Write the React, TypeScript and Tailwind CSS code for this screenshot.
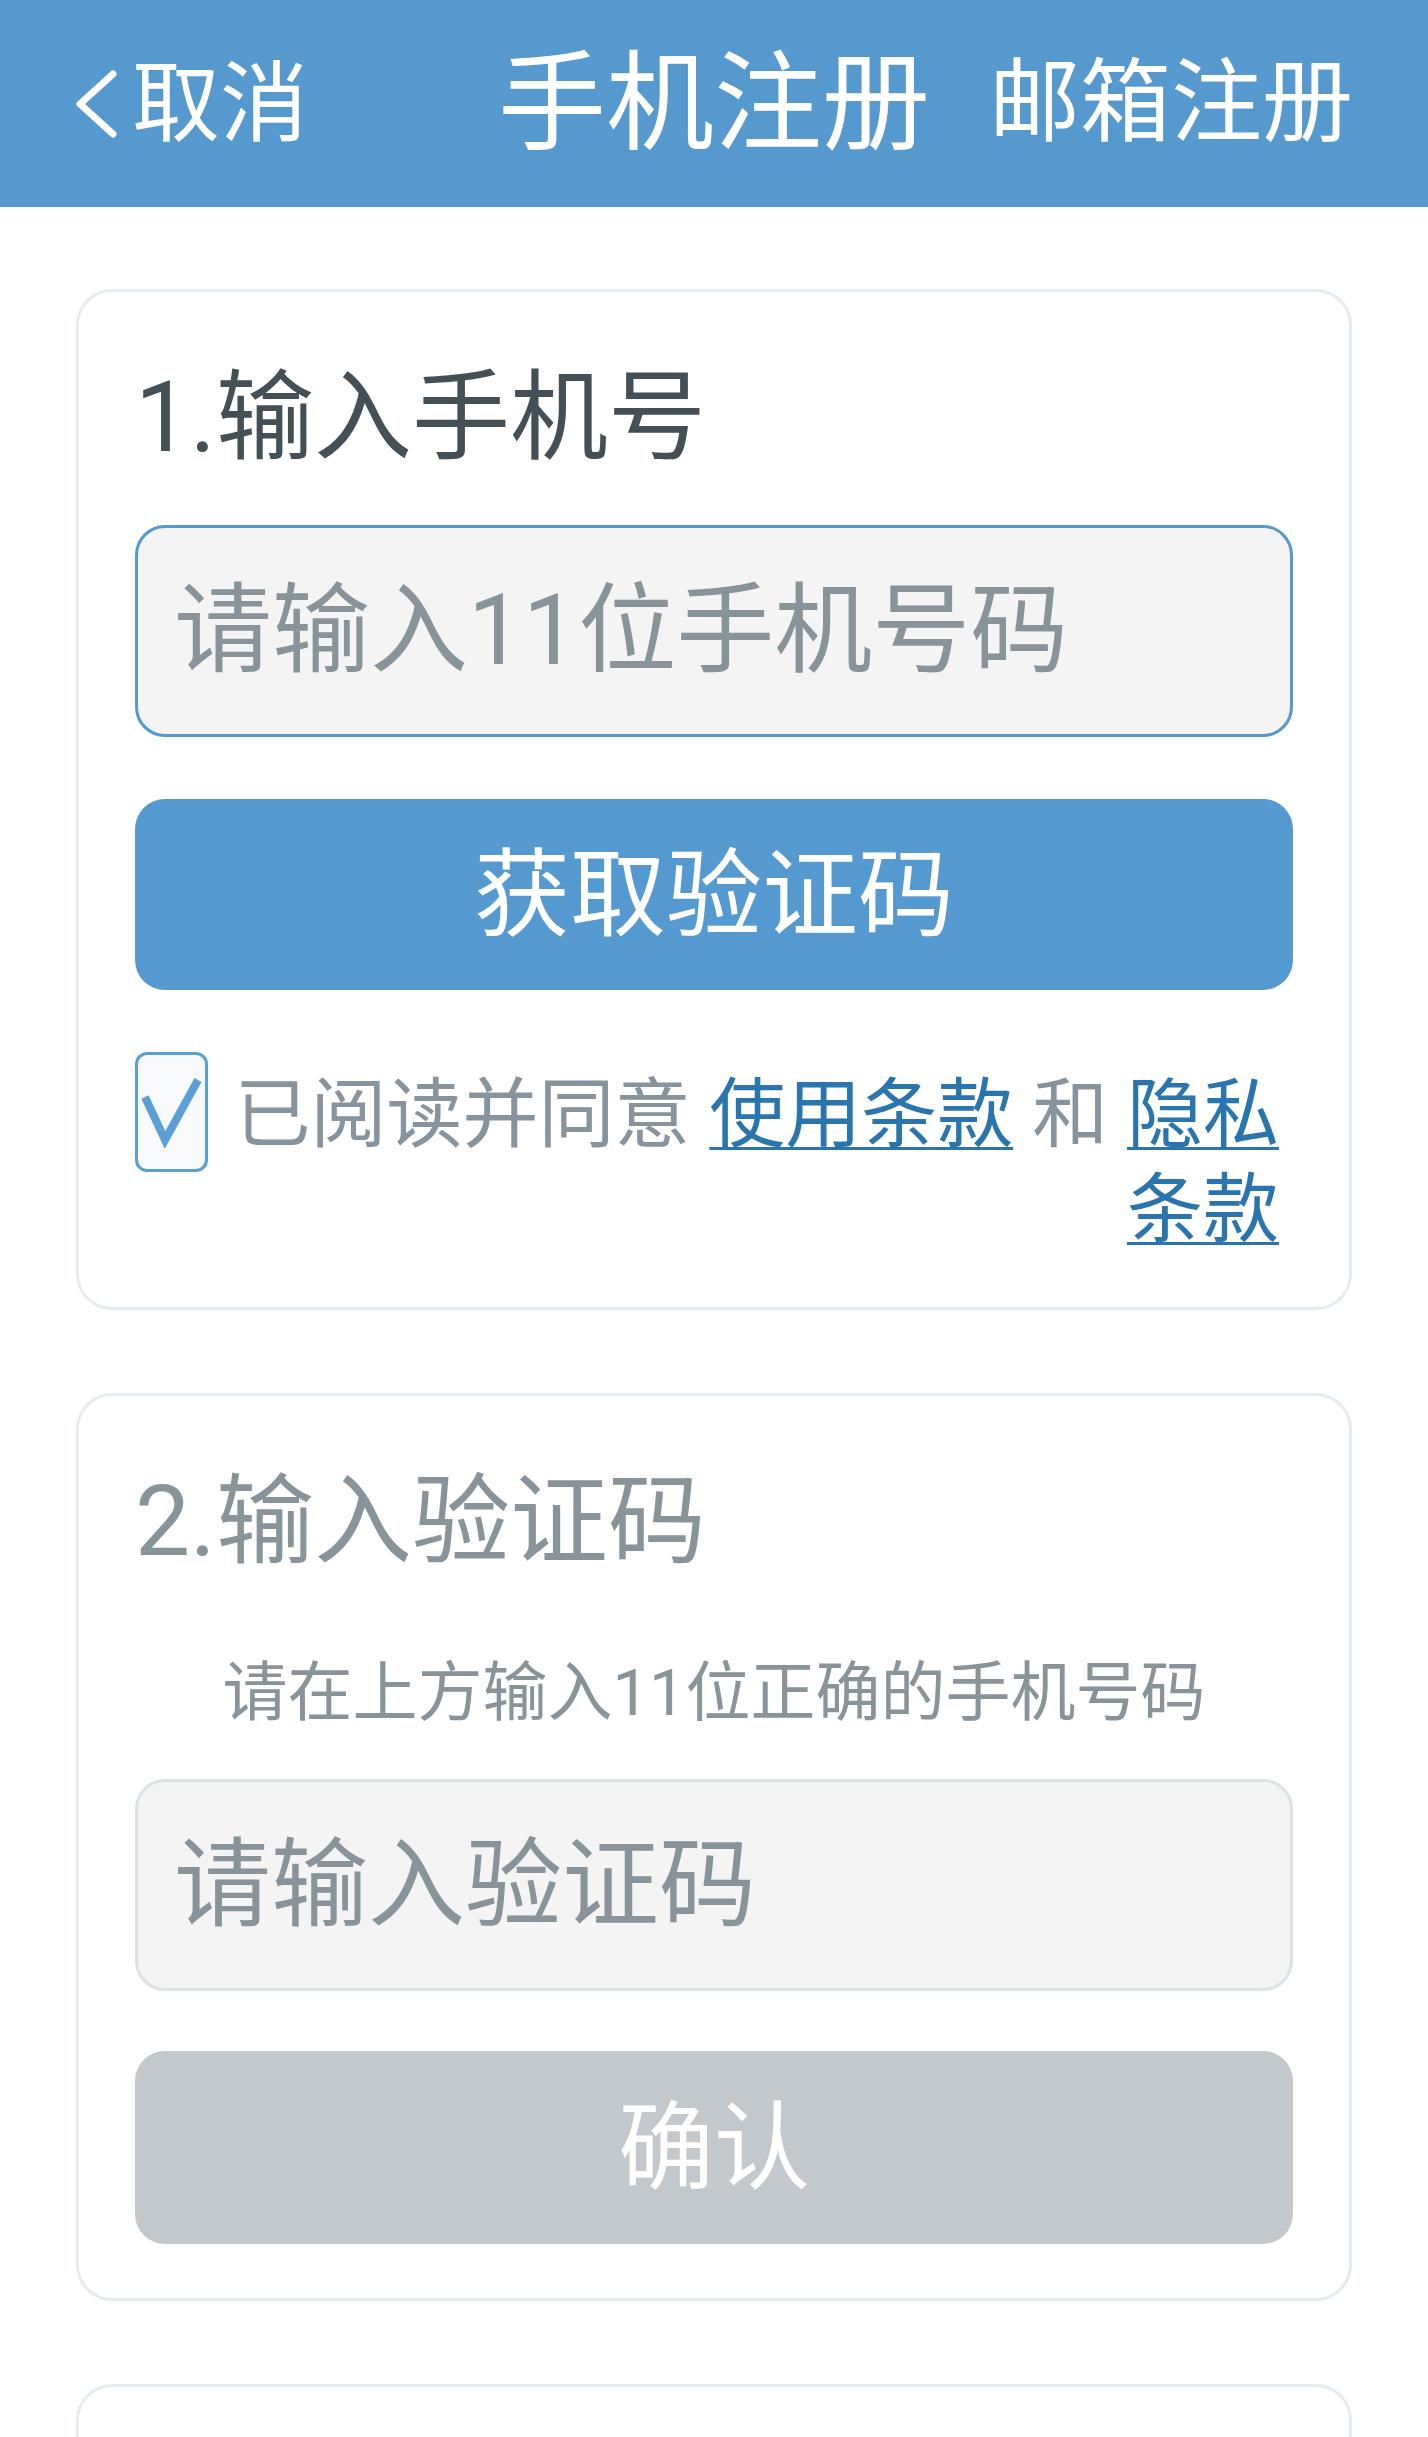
import React from "react";

const CheckBox = () => (
    <div className="relative w-[73px] h-[120px] shrink-0 rounded-[12px] border-[3px] border-[#5a9fd6] bg-[#f8f9fa]">
        <svg className="absolute inset-0 w-full h-full" viewBox="0 0 67 114">
            <polyline points="7,42 27,85 60,25" fill="none" stroke="#5a9fd6" strokeWidth="8" strokeLinejoin="miter" />
        </svg>
    </div>
);

const Link = ({ children }: { children: React.ReactNode }) => (
    <a className="text-[#2a75ad] underline decoration-[3px] underline-offset-[6px]">{children}</a>
);

export default function App() {
    return (
        <div className="min-h-screen bg-white font-[Roboto,'Noto_Sans_CJK_SC',sans-serif]">
            <header className="h-[207px] bg-[#5599ce] grid grid-cols-[1fr_auto_1fr] items-center px-[75px] text-white">
                <div className="flex items-center gap-[15px]">
                    <svg width="42" height="68" viewBox="0 0 42 68">
                        <polyline points="38,4 5,34 38,64" fill="none" stroke="white" strokeWidth="7" strokeLinecap="round" strokeLinejoin="round" />
                    </svg>
                    <span className="text-[88px] leading-none">取消</span>
                </div>
                <div className="text-[108px] leading-none">手机注册</div>
                <div className="text-[91px] leading-none text-right">邮箱注册</div>
            </header>

            <main className="flex flex-col gap-[83px] pt-[82px] px-[76px]">
                {/* step 1 */}
                <section className="rounded-[36px] border-[3px] border-[#e6ebef] px-[56px] pt-[77px] pb-[49px]">
                    <h2 className="text-[98px] leading-none text-[#454f56]">1.输入手机号</h2>
                    <div className="mt-[58px] h-[212px] rounded-[30px] border-[3px] border-[#5599ce] bg-[#f4f4f4] flex items-center pl-[36px] text-[98px] leading-none text-[#89939a]">
                        请输入11位手机号码
                    </div>
                    <button className="mt-[62px] h-[191px] w-full rounded-[30px] bg-[#5599d1] text-white text-[96px] leading-none">
                        获取验证码
                    </button>
                    <div className="mt-[62px] flex items-start">
                        <CheckBox />
                        <div className="ml-[24px] mr-[14px] mt-[16px] flex-1 text-right text-[76px] leading-[95px] text-[#87939d]">
                            <div className="whitespace-nowrap">
                                已阅读并同意 <Link>使用条款</Link> 和 <Link>隐私</Link>
                            </div>
                            <div>
                                <Link>条款</Link>
                            </div>
                        </div>
                    </div>
                </section>

                {/* step 2 */}
                <section className="rounded-[36px] border-[3px] border-[#e6ebef] px-[56px] pt-[77px] pb-[54px]">
                    <h2 className="text-[98px] leading-none text-[#89939a]">2.输入验证码</h2>
                    <p className="mt-[90px] text-center text-[65px] leading-none text-[#89939a]">请在上方输入11位正确的手机号码</p>
                    <div className="mt-[53px] h-[212px] rounded-[30px] border-[3px] border-[#dde2e5] bg-[#f4f4f4] flex items-center pl-[36px] text-[97px] leading-none text-[#89939a]">
                        请输入验证码
                    </div>
                    <button className="mt-[60px] h-[193px] w-full rounded-[30px] bg-[#c3c8cc] text-white text-[96px] leading-none">
                        确认
                    </button>
                </section>

                <section className="h-[400px] rounded-[36px] border-[3px] border-[#e6ebef]" />
            </main>
        </div>
    );
}
